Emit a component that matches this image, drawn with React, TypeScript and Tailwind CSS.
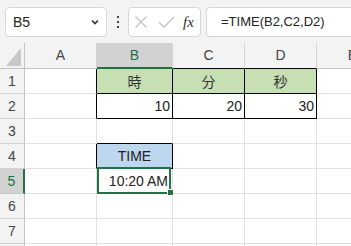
import React from "react";

const font = { fontFamily: '"Liberation Sans", "Noto Sans CJK JP", sans-serif' };
const cjk = { fontFamily: '"Noto Sans CJK JP", sans-serif' };

function RowHead({ n, active }: { n?: number; active?: boolean }) {
  return (
    <div
      className={
        "w-[25px] shrink-0 h-full flex items-center justify-center text-[14px] border-b " +
        (active
          ? "bg-[#d2d2d2] text-[#217346] border-r-2 border-r-[#217346] border-b-[#c4c4c4]"
          : "bg-[#f3f3f3] text-[#444] border-r border-r-[#c4c4c4] border-b-[#d4d4d4]")
      }
    >
      {n}
    </div>
  );
}

export default function App() {
  const g = "shrink-0 border-r border-b border-[#e1e1e1]";
  return (
    <div className="w-[351px] h-[246px] overflow-hidden bg-white text-[#222]" style={font}>
      {/* formula bar */}
      <div className="h-[43px] bg-[#f3f3f3] flex items-start pt-[7px] pl-[5px]">
        <div className="w-[102px] shrink-0 h-[30px] bg-white border border-[#d6d6d6] rounded-[4px] flex items-center justify-between pl-[7px] pr-[6px]">
          <span className="text-[14px] text-[#222]">B5</span>
          <svg width="10" height="8" viewBox="0 0 10 8">
            <path d="M2 2.5 L5 5.5 L8 2.5" stroke="#333" strokeWidth="1.6" fill="none" />
          </svg>
        </div>
        <div className="w-[21px] shrink-0 h-[30px] flex flex-col items-center justify-center gap-[3px]">
          <div className="w-[2px] h-[2px] bg-[#444]" />
          <div className="w-[2px] h-[2px] bg-[#444]" />
          <div className="w-[2px] h-[2px] bg-[#444]" />
        </div>
        <div className="w-[73px] shrink-0 h-[30px] bg-white border border-[#d6d6d6] rounded-[4px] flex items-center pl-[5px] gap-[10px]">
          <svg width="14" height="14" viewBox="0 0 14 14">
            <path d="M1.5 1.5 L12.5 12.5 M12.5 1.5 L1.5 12.5" stroke="#c4c4c4" strokeWidth="1.3" />
          </svg>
          <svg width="17" height="14" viewBox="0 0 17 14">
            <path d="M1 7.5 L6 12 L16 2" stroke="#c4c4c4" strokeWidth="1.3" fill="none" />
          </svg>
          <span
            className="text-[15px] italic text-[#333] -ml-[2px]"
            style={{ fontFamily: '"Liberation Serif", serif' }}
          >
            fx
          </span>
        </div>
        <div className="ml-[5px] flex-1 h-[30px] bg-white border border-[#d6d6d6] border-r-0 rounded-l-[4px] flex items-center pl-[14px]">
          <span className="text-[13px] text-[#222]">=TIME(B2,C2,D2)</span>
        </div>
      </div>

      {/* column headers */}
      <div className="flex h-[26px] bg-[#f3f3f3] text-[14px] text-[#444]">
        <div className="w-[25px] shrink-0 h-full border-r border-b border-[#c4c4c4] flex items-end justify-end pr-[2px] pb-[2px]">
          <svg width="16" height="18" viewBox="0 0 16 18">
            <path d="M15 0 L15 18 L0 18 Z" fill="#c8c8c8" />
          </svg>
        </div>
        <div className="w-[72px] shrink-0 h-full border-r border-b border-[#d4d4d4] border-b-[#c4c4c4] flex items-center justify-center">A</div>
        <div className="w-[76px] shrink-0 h-full border-r border-r-[#d4d4d4] border-b-2 border-b-[#217346] bg-[#d2d2d2] text-[#217346] flex items-center justify-center">B</div>
        <div className="w-[72px] shrink-0 h-full border-r border-r-[#d4d4d4] border-b border-b-black flex items-center justify-center">C</div>
        <div className="w-[72px] shrink-0 h-full border-r border-r-[#d4d4d4] border-b border-b-black flex items-center justify-center">D</div>
        <div className="w-[72px] shrink-0 h-full border-r border-b border-[#d4d4d4] border-b-[#c4c4c4] flex items-center justify-center">E</div>
      </div>

      {/* row 1 */}
      <div className="flex h-[25px] text-[14px]">
        <RowHead n={1} />
        <div className="w-[72px] shrink-0 border-b border-b-[#e1e1e1] border-r border-r-black" />
        <div className="w-[76px] shrink-0 bg-[#c6e0b4] border-r border-b border-black flex items-center justify-center text-[#333]" style={cjk}>時</div>
        <div className="w-[72px] shrink-0 bg-[#c6e0b4] border-r border-b border-black flex items-center justify-center text-[#333]" style={cjk}>分</div>
        <div className="w-[72px] shrink-0 bg-[#c6e0b4] border-r border-b border-black flex items-center justify-center text-[#333]" style={cjk}>秒</div>
        <div className={"w-[72px] " + g} />
      </div>

      {/* row 2 */}
      <div className="flex h-[25px] text-[14px]">
        <RowHead n={2} />
        <div className="w-[72px] shrink-0 border-b border-b-[#e1e1e1] border-r border-r-black" />
        <div className="w-[76px] shrink-0 border-r border-b border-black flex items-center justify-end pr-[2px]">10</div>
        <div className="w-[72px] shrink-0 border-r border-b border-black flex items-center justify-end pr-[2px]">20</div>
        <div className="w-[72px] shrink-0 border-r border-b border-black flex items-center justify-end pr-[2px]">30</div>
        <div className={"w-[72px] " + g} />
      </div>

      {/* row 3 */}
      <div className="flex h-[25px] text-[14px]">
        <RowHead n={3} />
        <div className={"w-[72px] " + g} />
        <div className="w-[76px] shrink-0 border-r border-r-[#e1e1e1] border-b border-b-black" />
        <div className={"w-[72px] " + g} />
        <div className={"w-[72px] " + g} />
        <div className={"w-[72px] " + g} />
      </div>

      {/* row 4 */}
      <div className="flex h-[25px] text-[14px]">
        <RowHead n={4} />
        <div className="w-[72px] shrink-0 border-b border-b-[#e1e1e1] border-r border-r-black" />
        <div className="w-[76px] shrink-0 bg-[#bdd7ee] border-r border-b border-black flex items-center justify-center">TIME</div>
        <div className={"w-[72px] " + g} />
        <div className={"w-[72px] " + g} />
        <div className={"w-[72px] " + g} />
      </div>

      {/* row 5 */}
      <div className="flex h-[25px] text-[14px]">
        <RowHead n={5} active />
        <div className={"w-[72px] " + g} />
        <div className="relative w-[76px] shrink-0 border-r border-b border-[#e1e1e1] flex items-center justify-end pr-[4px]">
          10:20 AM
          <div className="absolute left-0 right-[1px] top-[-2px] bottom-[-1px] border-2 border-[#217346] pointer-events-none" />
          <div className="absolute right-[-2px] bottom-[-3px] w-[5px] h-[5px] bg-[#217346] border border-white box-content" />
        </div>
        <div className={"w-[72px] " + g} />
        <div className={"w-[72px] " + g} />
        <div className={"w-[72px] " + g} />
      </div>

      {/* row 6 */}
      <div className="flex h-[25px] text-[14px]">
        <RowHead n={6} />
        <div className={"w-[72px] " + g} />
        <div className={"w-[76px] " + g} />
        <div className={"w-[72px] " + g} />
        <div className={"w-[72px] " + g} />
        <div className={"w-[72px] " + g} />
      </div>

      {/* row 7 */}
      <div className="flex h-[25px] text-[14px]">
        <RowHead n={7} />
        <div className={"w-[72px] " + g} />
        <div className={"w-[76px] " + g} />
        <div className={"w-[72px] " + g} />
        <div className={"w-[72px] " + g} />
        <div className={"w-[72px] " + g} />
      </div>

      {/* row 8 (sliver) */}
      <div className="flex h-[25px] text-[14px]">
        <RowHead />
        <div className={"w-[72px] " + g} />
        <div className={"w-[76px] " + g} />
        <div className={"w-[72px] " + g} />
        <div className={"w-[72px] " + g} />
        <div className={"w-[72px] " + g} />
      </div>
    </div>
  );
}
